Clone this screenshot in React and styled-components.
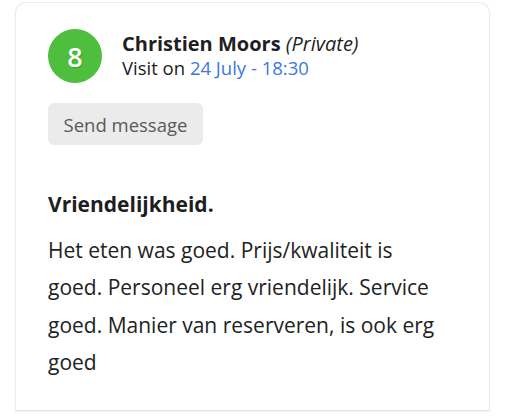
import React from "react";
import styled, { createGlobalStyle } from "styled-components";

const GlobalStyle = createGlobalStyle`
  body {
    margin: 0;
    background: #ffffff;
    font-family: "Open Sans", "Noto Sans", sans-serif;
    color: #222222;
  }
`;

const Page = styled.div`
  padding: 2px 22px 0 15px;
  height: 417px;
  box-sizing: border-box;
  overflow: hidden;
`;

const Card = styled.div`
  border: 1px solid #ececec;
  border-bottom-color: #e4e4e4;
  border-radius: 11px 11px 0 0;
  padding: 26px 39px 28px 32px;
  box-shadow: 0 1px 2px rgba(0, 0, 0, 0.05);
`;

const Header = styled.div`
  display: flex;
  align-items: center;
  gap: 20px;
`;

const Score = styled.div`
  width: 54px;
  height: 54px;
  border-radius: 50%;
  background: #4dbf3c;
  color: #ffffff;
  font-size: 27px;
  font-weight: 600;
  display: flex;
  align-items: center;
  justify-content: center;
  text-shadow: 1px 1px 0 #3d9f2f;
  flex-shrink: 0;
`;

const Info = styled.div`
  display: flex;
  flex-direction: column;
`;

const Name = styled.div`
  font-size: 20px;
  line-height: 24px;
  font-weight: 700;
  color: #1f1f1f;
  em {
    font-weight: 400;
  }
`;

const Visit = styled.div`
  font-size: 18.5px;
  line-height: 24px;
  color: #222222;
  span {
    color: #3b78e3;
  }
`;

const Button = styled.button`
  display: block;
  margin-top: 20px;
  background: #ebebeb;
  border: none;
  border-radius: 6px;
  height: 42px;
  padding: 0 15.5px;
  font-family: inherit;
  font-size: 18.5px;
  color: #595959;
`;

const Title = styled.h3`
  margin: 45px 0 0 0;
  font-size: 21px;
  line-height: 28px;
  font-weight: 700;
  color: #1e1e1e;
`;

const Body = styled.p`
  margin: 14px 0 0 0;
  font-size: 21px;
  line-height: 37.4px;
  color: #222222;
`;

const App = () => (
  <Page>
    <GlobalStyle />
    <Card>
      <Header>
        <Score>8</Score>
        <Info>
          <Name>
            Christien Moors <em>(Private)</em>
          </Name>
          <Visit>
            Visit on <span>24 July - 18:30</span>
          </Visit>
        </Info>
      </Header>
      <Button>Send message</Button>
      <Title>Vriendelijkheid.</Title>
      <Body>
        Het eten was goed. Prijs/kwaliteit is goed. Personeel erg vriendelijk.
        Service goed. Manier van reserveren, is ook erg goed
      </Body>
    </Card>
  </Page>
);

export default App;
